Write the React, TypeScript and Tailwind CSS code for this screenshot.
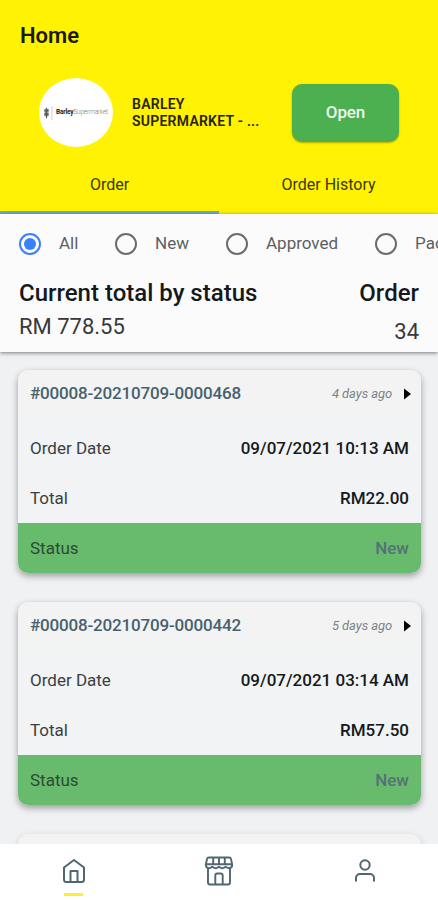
const FILTERS = [
  { label: "All", width: "w-[96px]", checked: true },
  { label: "New", width: "w-[111px]", checked: false },
  { label: "Approved", width: "w-[149px]", checked: false },
  { label: "Packed", width: "w-[120px]", checked: false },
];

const ORDERS = [
  {
    id: "#00008-20210709-0000468",
    age: "4 days ago",
    date: "09/07/2021 10:13 AM",
    total: "RM22.00",
    status: "New",
  },
  {
    id: "#00008-20210709-0000442",
    age: "5 days ago",
    date: "09/07/2021 03:14 AM",
    total: "RM57.50",
    status: "New",
  },
];

type Order = (typeof ORDERS)[number];

function StoreLogo() {
  return (
    <div className="flex h-[69px] w-[74px] shrink-0 items-center justify-center rounded-[50%] bg-white">
      <svg width="9" height="14" viewBox="0 0 9 14" fill="#555" className="shrink-0">
        <ellipse cx="2.5" cy="7" rx="0.8" ry="5.5" />
        <ellipse cx="1.1" cy="4.5" rx="0.8" ry="1.8" />
        <ellipse cx="3.9" cy="4.5" rx="0.8" ry="1.8" />
        <ellipse cx="1.1" cy="8.3" rx="0.8" ry="2" />
        <ellipse cx="3.9" cy="8.3" rx="0.8" ry="2" />
        <path d="M8 0v14" stroke="#bbb" strokeWidth="0.7" />
      </svg>
      <span className="ml-[3px] text-[6.5px] tracking-[-0.18px] text-[#777]">
        <b className="text-[#222]">Barley</b>
        <span className="font-light">Supermarket</span>
      </span>
    </div>
  );
}

function Radio({ checked }: { checked: boolean }) {
  return (
    <span
      className={
        checked
          ? "flex size-[22px] shrink-0 items-center justify-center rounded-full border-2 border-[#3880ff]"
          : "size-[22px] shrink-0 rounded-full border-2 border-[#6c6c6c]"
      }
    >
      {checked && <span className="size-3 rounded-full bg-[#3880ff]" />}
    </span>
  );
}

function OrderCard({ order }: { order: Order }) {
  return (
    <article className="h-[203px] shrink-0 overflow-hidden rounded-[10px] bg-[#f1f3f5] text-[17px] text-[#3c4043] shadow-[0_3px_7px_rgba(0,0,0,0.36)]">
      <div className="flex h-[53px] items-center bg-linear-to-b from-[#f3f3f3] from-80% to-[#f1f3f5] pr-[10px] pb-[6px] pl-3">
        <span className="font-medium tracking-[-0.18px] text-[#46616d]">{order.id}</span>
        <span className="mr-3 ml-auto text-[13px] tracking-[-0.1px] text-[#7a8389] italic">
          {order.age}
        </span>
        <svg width="7" height="12" viewBox="0 0 7 12" fill="#000">
          <path d="M0 .5L7 6l-7 5.500z" />
        </svg>
      </div>
      <div className="flex h-[50px] items-center justify-between px-3 pt-0.5">
        <span>Order Date</span>
        <span className="font-medium text-[#15191c]">{order.date}</span>
      </div>
      <div className="flex h-[50px] items-center justify-between px-3 pt-0.5">
        <span>Total</span>
        <span className="font-medium text-[#15191c]">{order.total}</span>
      </div>
      <div className="flex h-[50px] items-center justify-between bg-[#68bb6c] px-3 pt-0.5">
        <span className="text-[#2b4a35]">Status</span>
        <span className="font-medium text-[#56707a]">{order.status}</span>
      </div>
    </article>
  );
}

function HomeIcon() {
  return (
    <svg width="24" height="26" viewBox="0 0 24 26" fill="none" stroke="#506670" strokeWidth="2" strokeLinejoin="round">
      <path d="M2 9.500L12 2l10 7.500v12a2.500 2.500 0 0 1-2.500 2.500h-15A2.500 2.500 0 0 1 2 21.500z" />
      <path d="M8.500 24V13h7v11" />
    </svg>
  );
}

function ShopIcon() {
  return (
    <svg width="30" height="30" viewBox="0 0 30 30" fill="none" stroke="#506670" strokeWidth="1.9" strokeLinejoin="round">
      <path d="M5 1.500h20a2 2 0 0 1 2 1.600l1.200 5.700c0 2-1.200 3.400-3.200 3.400-1.700 0-2.600-.7-3.300-1.500-.8.900-1.900 1.500-3.400 1.500s-2.500-.6-3.300-1.500c-.8.900-1.800 1.500-3.300 1.500s-2.600-.6-3.400-1.500c-.7.800-1.600 1.500-3.300 1.500-2 0-3.200-1.400-3.200-3.400L3 3.100a2 2 0 0 1 2-1.600z" />
      <path d="M2 8.200h26M9.200 1.500v6.700M15 1.500v6.700M20.800 1.500v6.700" />
      <path d="M4 12.500v14a2 2 0 0 0 2 2h18a2 2 0 0 0 2-2v-14M11.300 28.500v-9a2 2 0 0 1 2-2h3.400a2 2 0 0 1 2 2v9" />
    </svg>
  );
}

function UserIcon() {
  return (
    <svg width="22" height="24" viewBox="0 0 22 24" fill="none" stroke="#506670" strokeWidth="2">
      <circle cx="11" cy="6" r="4.700" />
      <path d="M2 22.500V19a4 4 0 0 1 4-4h10a4 4 0 0 1 4 4v3.500" />
    </svg>
  );
}

export default function App() {
  return (
    <div className="flex h-[900px] w-[438px] flex-col overflow-hidden bg-[#f0f1f3] font-[Roboto,sans-serif]">
      <header className="flex h-[214px] shrink-0 flex-col bg-[#fff203]">
        <h1 className="h-[71px] pt-5 pl-5 text-[22px] leading-8 font-semibold text-[#191900]">
          Home
        </h1>
        <div className="flex h-[83px] items-center px-[39px]">
          <StoreLogo />
          <p className="ml-[19px] w-[135px] text-[14px] leading-[17px] font-semibold tracking-[0.25px] text-[#252300]">
            BARLEY
            <br />
            SUPERMARKET - ...
          </p>
          <button className="ml-auto h-[58px] w-[107px] rounded-[10px] bg-[#4caf50] text-[17px] font-medium tracking-[-0.1px] text-[#f0f8ee] shadow-[0_1px_2px_rgba(0,0,0,0.3)]">
            Open
          </button>
        </div>
        <nav className="grid flex-1 grid-cols-2 text-[16px] text-[#3b3800]">
          <button className="border-b-[3px] border-[#70aacb] pt-1">Order</button>
          <button className="border-b-[3px] border-transparent pt-1">Order History</button>
        </nav>
      </header>

      <section className="z-10 h-[138px] shrink-0 bg-[#fbfbfb] shadow-[0_1px_4px_rgba(0,0,0,0.5)]">
        <div className="flex h-[59px] items-center overflow-hidden pl-[19px] text-[17px] text-[#5c5f61]">
          {FILTERS.map((f) => (
            <label key={f.label} className={`flex shrink-0 items-center gap-[18px] ${f.width}`}>
              <Radio checked={f.checked} />
              {f.label}
            </label>
          ))}
        </div>
        <div className="flex justify-between px-[19px] pt-1">
          <div>
            <h2 className="text-[24px] leading-8 font-medium text-[#16191c]">Current total by status</h2>
            <p className="text-[22px] leading-9 text-[#36393b]">RM 778.55</p>
          </div>
          <div className="text-right">
            <h2 className="text-[24px] leading-8 font-medium text-[#16191c]">Order</h2>
            <p className="pt-[5px] text-[22px] leading-9 text-[#36393b]">34</p>
          </div>
        </div>
      </section>

      <main className="flex min-h-0 flex-1 flex-col gap-[29px] overflow-hidden pt-[18px] pr-[17px] pl-[18px]">
        {ORDERS.map((order) => (
          <OrderCard key={order.id} order={order} />
        ))}
        <article className="h-[203px] shrink-0 rounded-[10px] bg-[#f3f3f3] shadow-[0_3px_7px_rgba(0,0,0,0.2)]" />
      </main>

      <nav className="z-10 grid h-14 shrink-0 grid-cols-3 bg-white">
        <button className="flex flex-col items-center pt-[14px] pl-px">
          <HomeIcon />
          <span className="mt-[9px] h-[3px] w-[19px] bg-[#ffec35]" />
        </button>
        <button className="flex justify-center pt-3">
          <ShopIcon />
        </button>
        <button className="flex justify-center pt-[15px]">
          <UserIcon />
        </button>
      </nav>
    </div>
  );
}
